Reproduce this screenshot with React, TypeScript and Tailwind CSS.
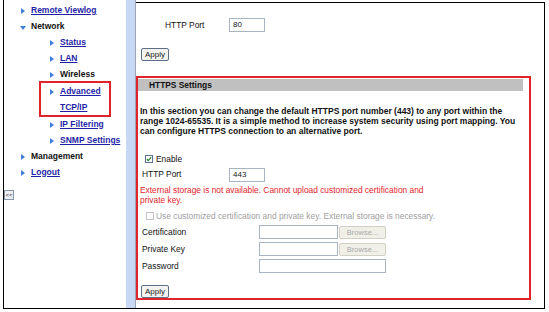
import React from 'react';

const font = "font-['Liberation_Sans',Arial,sans-serif]";

function Bullet({ dir }: { dir?: 'right' | 'down' }) {
  if (dir === 'right') {
    return (
      <svg width="4" height="6" viewBox="0 0 4 6" className="self-start mt-[2px]">
        <path d="M0 0L4 3L0 6Z" fill="#3f7fd9" />
      </svg>
    );
  }
  if (dir === 'down') {
    return (
      <svg width="6" height="4" viewBox="0 0 6 4" className="self-start mt-[4px] -ml-[1px]">
        <path d="M0 0L6 0L3 4Z" fill="#3f7fd9" />
      </svg>
    );
  }
  return <span className="w-[4px]" />;
}

function NavItem({
  label,
  link,
  dir,
  indent,
}: {
  label: string;
  link?: boolean;
  dir?: 'right' | 'down';
  indent: string;
}) {
  return (
    <div className={`flex items-center h-[16px] ${indent}`}>
      <span className="w-[10px] flex">
        <Bullet dir={dir} />
      </span>
      <span
        className={`text-[8.5px] font-bold leading-none ${
          link ? 'text-[#1f1fa8] underline' : 'text-[#111]'
        }`}
      >
        {label}
      </span>
    </div>
  );
}

function TextInput({ value, w }: { value?: string; w: string }) {
  return (
    <div className={`${w} h-[14px] border border-[#a9b4c2] bg-white text-[8px] leading-[12px] pl-[3px] text-[#222]`}>
      {value}
    </div>
  );
}

function Browse() {
  return (
    <div className="ml-[1px] w-[47px] h-[13px] border border-[#d2d0c4] rounded-[2px] bg-[#f1f0e8] text-[7.5px] leading-[11px] text-center text-[#a8a8a8]">
      Browse...
    </div>
  );
}

function ApplyButton() {
  return (
    <div className="w-[28px] h-[13px] border border-[#5f6f88] rounded-[2px] bg-[#f3f3f0] text-[8px] leading-[11px] text-center text-[#222]">
      Apply
    </div>
  );
}

export default function App() {
  return (
    <div className={`w-[549px] h-[312px] bg-white overflow-hidden ${font}`}>
      <div className="ml-[3px] w-[542px] h-[309px] border-l border-b border-black flex">
        {/* left navigation */}
        <div className="w-[122px] flex flex-col pt-[2px]">
          <NavItem label="Remote Viewlog" link dir="right" indent="pl-[17px]" />
          <NavItem label="Network" dir="down" indent="pl-[17px]" />
          <NavItem label="Status" link dir="right" indent="pl-[46px]" />
          <NavItem label="LAN" link dir="right" indent="pl-[46px]" />
          <NavItem label="Wireless" dir="right" indent="pl-[46px]" />
          <div className="ml-[35px] w-[72px] border-2 border-[#e0242b] -mt-[1px]">
            <NavItem label="Advanced" link dir="right" indent="pl-[9px]" />
            <NavItem label="TCP/IP" link indent="pl-[9px]" />
          </div>
          <div className="-mt-[1px]">
            <NavItem label="IP Filtering" link dir="right" indent="pl-[46px]" />
            <NavItem label="SNMP Settings" link dir="right" indent="pl-[46px]" />
            <NavItem label="Management" dir="right" indent="pl-[17px]" />
            <NavItem label="Logout" link dir="right" indent="pl-[17px]" />
          </div>
          <div className="mt-[10px] w-[10px] h-[10px] border border-[#8a96a8] bg-[#eef0f4] text-[6px] leading-[8px] text-center text-[#223]">
            &lt;&lt;
          </div>
        </div>

        {/* splitter */}
        <div className="w-[10px] bg-[#c9d8f5] border-r border-[#9aa4b4]" />

        {/* content */}
        <div className="flex-1 mt-[2px] border-t border-r border-black flex flex-col text-[8.4px] text-[#111]">
          <div className="flex items-center mt-[15px] pl-[29px]">
            <span className="w-[64px]">HTTP Port</span>
            <TextInput value="80" w="w-[36px]" />
          </div>
          <div className="ml-[5px] mt-[16px]">
            <ApplyButton />
          </div>

          <div className="mt-[15px] w-[395px] h-[224px] border-2 border-[#e0242b] flex flex-col">
            <div className="mt-[1px] w-[385px] h-[12px] bg-[#c0c0c0] pl-[11px] font-bold text-[8.4px] leading-[12px] text-[#111]">
              HTTPS Settings
            </div>
            <p className="mt-[15px] pl-[2px] w-[384px] font-bold text-[8.5px] leading-[10px] text-[#111]">
              In this section you can change the default HTTPS port number (443) to any port within the
              range 1024-65535. It is a simple method to increase system security using port mapping. You
              can configure HTTPS connection to an alternative port.
            </p>
            <div className="flex items-center mt-[17px] pl-[7px]">
              <div className="w-[8px] h-[8px] border border-[#5d7390] bg-white flex items-center justify-center">
                <svg width="6" height="6" viewBox="0 0 6 6">
                  <path d="M0.8 3L2.4 4.6L5.2 1.2" stroke="#2f8a2f" strokeWidth="1.2" fill="none" />
                </svg>
              </div>
              <span className="ml-[3px]">Enable</span>
            </div>
            <div className="flex items-center mt-[2px] pl-[4px]">
              <span className="w-[87px]">HTTP Port</span>
              <TextInput value="443" w="w-[36px]" />
            </div>
            <p className="mt-[3px] pl-[2px] text-[#e0242b] leading-[10px] w-[300px]">
              External storage is not available. Cannot upload customized certification and private key.
            </p>
            <div className="flex items-center mt-[5px] pl-[8px] text-[#a0a0a0]">
              <div className="w-[8px] h-[8px] border border-[#c4c4c4] bg-white" />
              <span className="ml-[2px]">
                Use customized certification and private key. External storage is necessary.
              </span>
            </div>
            <div className="flex items-center mt-[3px] pl-[4px]">
              <span className="w-[117px]">Certification</span>
              <TextInput w="w-[79px]" />
              <Browse />
            </div>
            <div className="flex items-center mt-[3px] pl-[4px]">
              <span className="w-[117px]">Private Key</span>
              <TextInput w="w-[79px]" />
              <Browse />
            </div>
            <div className="flex items-center mt-[3px] pl-[4px]">
              <span className="w-[117px]">Password</span>
              <TextInput w="w-[127px]" />
            </div>
            <div className="ml-[3px] mt-auto mb-[0px]">
              <ApplyButton />
            </div>
          </div>
        </div>
      </div>
    </div>
  );
}
